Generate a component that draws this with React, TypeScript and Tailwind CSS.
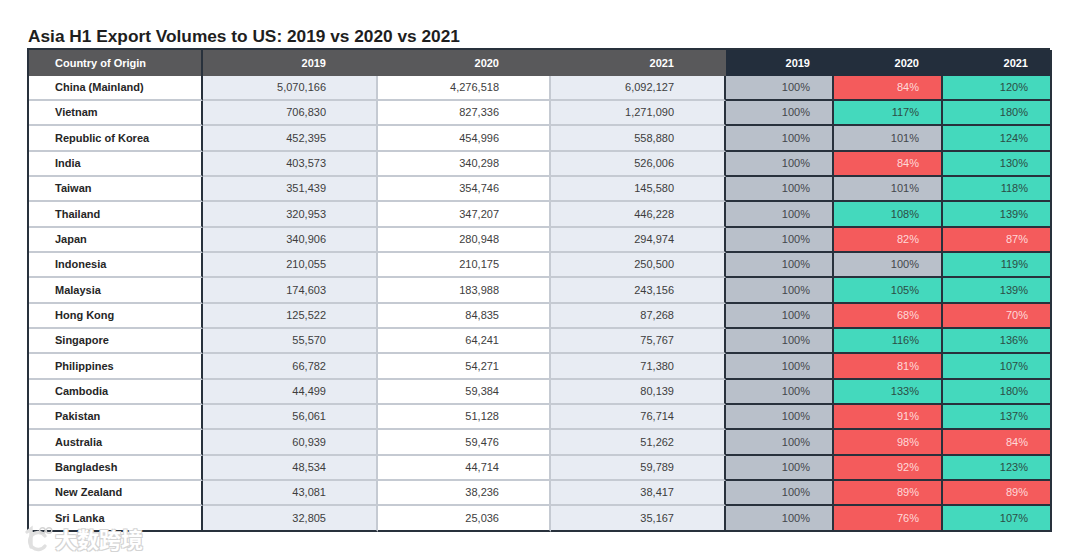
import React from "react";

type Row = [string, string, string, string, number, number];

const rows: Row[] = [
  ["China (Mainland)", "5,070,166", "4,276,518", "6,092,127", 84, 120],
  ["Vietnam", "706,830", "827,336", "1,271,090", 117, 180],
  ["Republic of Korea", "452,395", "454,996", "558,880", 101, 124],
  ["India", "403,573", "340,298", "526,006", 84, 130],
  ["Taiwan", "351,439", "354,746", "145,580", 101, 118],
  ["Thailand", "320,953", "347,207", "446,228", 108, 139],
  ["Japan", "340,906", "280,948", "294,974", 82, 87],
  ["Indonesia", "210,055", "210,175", "250,500", 100, 119],
  ["Malaysia", "174,603", "183,988", "243,156", 105, 139],
  ["Hong Kong", "125,522", "84,835", "87,268", 68, 70],
  ["Singapore", "55,570", "64,241", "75,767", 116, 136],
  ["Philippines", "66,782", "54,271", "71,380", 81, 107],
  ["Cambodia", "44,499", "59,384", "80,139", 133, 180],
  ["Pakistan", "56,061", "51,128", "76,714", 91, 137],
  ["Australia", "60,939", "59,476", "51,262", 98, 84],
  ["Bangladesh", "48,534", "44,714", "59,789", 92, 123],
  ["New Zealand", "43,081", "38,236", "38,417", 89, 89],
  ["Sri Lanka", "32,805", "25,036", "35,167", 76, 107],
];

function pctClass(v: number) {
  if (v < 100) return "bg-[#f45b5c] text-[#ffd9d9]";
  if (v <= 101) return "bg-[#b9c0ca] text-[#44474c]";
  return "bg-[#44d9bd] text-[#2c4d45]";
}

export default function App() {
  const n = rows.length;
  return (
    <div
      className="relative w-[1080px] h-[558px] overflow-hidden bg-white pt-[26px] pl-[27px]"
      style={{ fontFamily: '"Liberation Sans", Arial, sans-serif' }}
    >
      <div className="pl-[1px] text-[17.3px] leading-[20px] font-bold text-[#1e1e1e] mb-[2px]">
        Asia H1 Export Volumes to US: 2019 vs 2020 vs 2021
      </div>
      <div className="grid w-[1023px] grid-cols-[174px_175px_173px_175px_108px_109px_109px] grid-rows-[25.5px_repeat(18,25.35px)] border-t-2 border-l-2 border-[#28313c] text-[11px]">
        {/* header */}
        <div className="flex items-center bg-[#59595b] border-r-2 border-[#28313c] pl-[26px] font-bold text-white">
          Country of Origin
        </div>
        <div className="flex items-center justify-end bg-[#59595b] border-r-2 border-[#59595b] pr-[50px] font-bold text-white">
          2019
        </div>
        <div className="flex items-center justify-end bg-[#59595b] border-r-2 border-[#59595b] pr-[50px] font-bold text-white">
          2020
        </div>
        <div className="flex items-center justify-end bg-[#59595b] border-r-2 border-[#59595b] pr-[50px] font-bold text-white">
          2021
        </div>
        <div className="flex items-center justify-end bg-[#232e3c] border-r-2 border-[#232e3c] pr-[22px] font-bold text-white">
          2019
        </div>
        <div className="flex items-center justify-end bg-[#232e3c] border-r-2 border-[#232e3c] pr-[22px] font-bold text-white">
          2020
        </div>
        <div className="flex items-center justify-end bg-[#232e3c] border-r-2 border-[#28313c] pr-[22px] font-bold text-white">
          2021
        </div>
        {rows.map((r, i) => {
          const last = i === n - 1;
          const lb = last ? "border-b-[#28313c]" : "border-b-[#c5cad2]";
          return (
            <React.Fragment key={r[0]}>
              <div
                className={`flex items-center bg-white border-r-2 border-b-2 border-r-[#28313c] ${lb} pl-[26px] font-bold text-[#262626]`}
              >
                {r[0]}
              </div>
              <div
                className={`flex items-center justify-end bg-[#e8ecf3] border-r-2 border-b-2 border-r-[#c5cad2] ${lb} pr-[50px] text-[#3d3d3d]`}
              >
                {r[1]}
              </div>
              <div
                className={`flex items-center justify-end bg-white border-r-2 border-b-2 border-r-[#c5cad2] ${lb} pr-[50px] text-[#3d3d3d]`}
              >
                {r[2]}
              </div>
              <div
                className={`flex items-center justify-end bg-[#e8ecf3] border-r-2 border-b-2 border-r-[#28313c] ${lb} pr-[50px] text-[#3d3d3d]`}
              >
                {r[3]}
              </div>
              <div
                className={`flex items-center justify-end border-r-2 border-b-2 border-[#28313c] pr-[22px] ${pctClass(100)}`}
              >
                100%
              </div>
              <div
                className={`flex items-center justify-end border-r-2 border-b-2 border-[#28313c] pr-[22px] ${pctClass(r[4])}`}
              >
                {r[4]}%
              </div>
              <div
                className={`flex items-center justify-end border-r-2 border-b-2 border-[#28313c] pr-[22px] ${pctClass(r[5])}`}
              >
                {r[5]}%
              </div>
            </React.Fragment>
          );
        })}
      </div>
      {/* watermark */}
      <div className="absolute left-[24px] top-[524px] flex items-center gap-[1px]">
        <svg width="30" height="28" viewBox="0 0 30 28" fill="none">
          <path d="M3 8 L7 5 L7 23" stroke="#e0e0e0" strokeWidth="3.4" strokeLinecap="round" />
          <path d="M21 12 A8.5 8.5 0 1 0 21 22" stroke="#e0e0e0" strokeWidth="3.4" strokeLinecap="round" />
          <circle cx="18.5" cy="6.5" r="2.8" stroke="#d4d4d4" strokeWidth="1.4" />
          <circle cx="25" cy="6.5" r="2.8" stroke="#d4d4d4" strokeWidth="1.4" />
        </svg>
        <span
          className="text-[22px] leading-[28px] font-bold text-white"
          style={{
            fontFamily: '"Noto Sans CJK SC", sans-serif',
            textShadow:
              "1px 1px 0 #d4d4d4, -1px -1px 0 #d4d4d4, 1px -1px 0 #d4d4d4, -1px 1px 0 #d4d4d4",
          }}
        >
          大数跨境
        </span>
      </div>
    </div>
  );
}
